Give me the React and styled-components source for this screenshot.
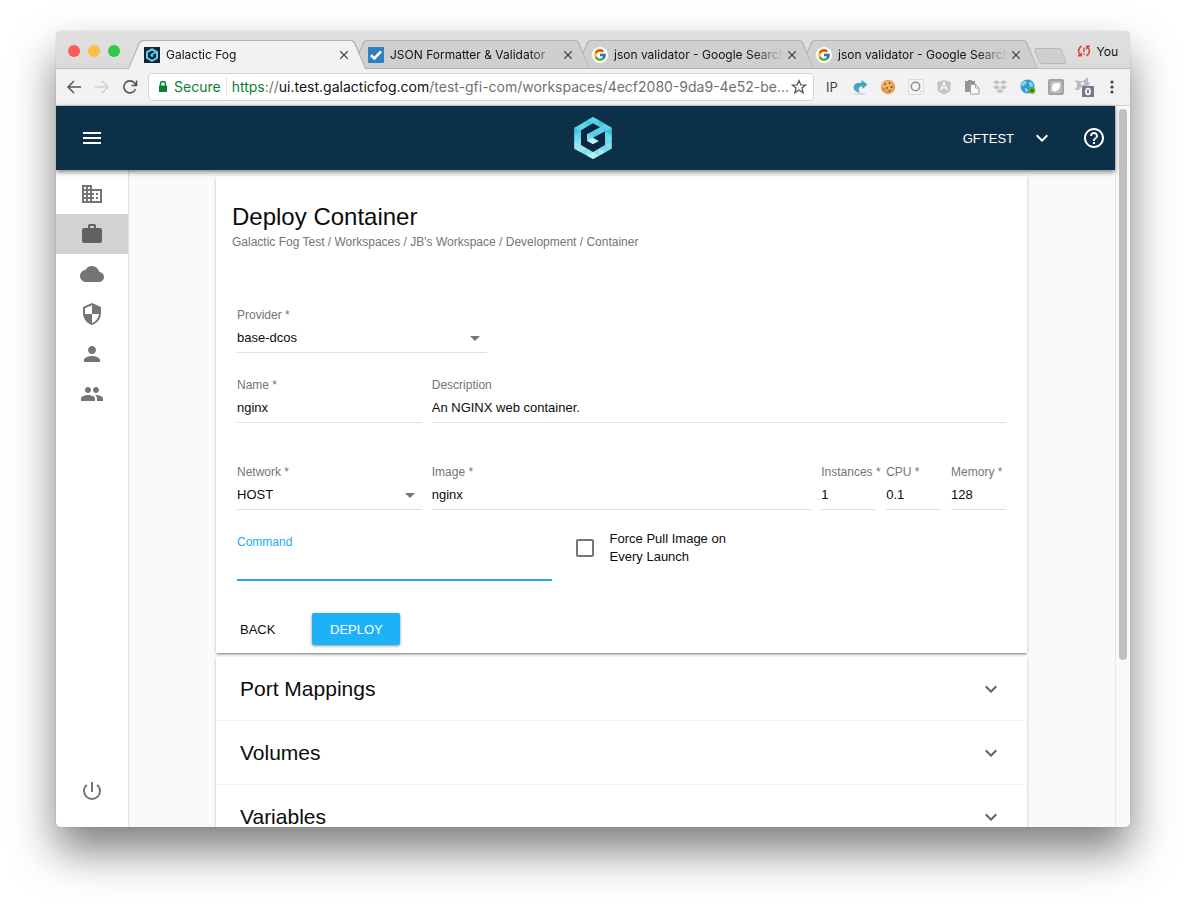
import React from "react";
import styled, { createGlobalStyle, css } from "styled-components";
import {
  MdMenu, MdKeyboardArrowDown, MdHelpOutline, MdDomain, MdWork, MdCloud,
  MdSecurity, MdPerson, MdPeople, MdPowerSettingsNew, MdArrowDropDown,
} from "react-icons/md";
import { FcGoogle } from "react-icons/fc";

const uiFont = `Inter, "Liberation Sans", sans-serif`;
const pageFont = `"Liberation Sans", Helvetica, Arial, sans-serif`;

const Global = createGlobalStyle`
  *, *::before, *::after { box-sizing: border-box; }
  body { margin: 0; background: #fff; }
  button, input, select { font: inherit; color: inherit; margin: 0; }
  button { border: 0; padding: 0; background: none; cursor: pointer; }
  svg { display: block; flex: none; }
`;

const Desktop = styled.div`
  height: 100vh;
  padding: 31px 56px 80px;
  display: flex;
  overflow: hidden;
`;

const BrowserWindow = styled.div`
  flex: 1;
  min-width: 0;
  display: flex;
  flex-direction: column;
  border-radius: 5px;
  overflow: hidden;
  background: #fafafa;
  box-shadow: 0 0 1px rgba(0, 0, 0, 0.35), 0 24px 44px rgba(0, 0, 0, 0.5);
`;

/* ---------- tab strip ---------- */

const TabStrip = styled.div`
  flex: none;
  height: 38px;
  display: flex;
  align-items: flex-end;
  padding: 0 12px;
  background: linear-gradient(#e0e0e0, #dadada);
  border-bottom: 1px solid #bdbdbd;
  font-family: ${uiFont};
  font-size: 12px;
  color: #111;
`;

const Lights = styled.div`
  flex: none;
  display: flex;
  gap: 8px;
  width: 60px;
  height: 23px;
`;

const Light = styled.button`
  width: 12px;
  height: 12px;
  border-radius: 50%;
  background: ${(p) => p.$color};
`;

const TabList = styled.div`
  display: flex;
  flex: 0 1 896px;
  min-width: 0;
  isolation: isolate;
  margin-bottom: -1px;
`;

const Tab = styled.div`
  position: relative;
  z-index: ${(p) => p.$level};
  flex: 1 1 0;
  min-width: 0;
  height: 29px;
  margin-right: -14px;
  padding: 0 17px 0 16px;
  display: flex;
  align-items: center;
  &::before, &::after {
    content: "";
    position: absolute;
    z-index: -1;
    inset: 0;
    background: #b2b2b2;
    clip-path: polygon(0 100%, 11px 2px, 14px 0, calc(100% - 14px) 0, calc(100% - 11px) 2px, 100% 100%);
  }
  &::after {
    inset: 1px 1px ${(p) => (p.$active ? 0 : 1)}px;
    background: ${(p) => (p.$active ? "#f2f2f2" : "#cfcfcf")};
  }
`;

const TabTitle = styled.button`
  flex: 1;
  min-width: 0;
  margin-right: -6px;
  padding-left: 6px;
  overflow: hidden;
  white-space: nowrap;
  text-align: left;
  line-height: 18px;
  mask-image: linear-gradient(90deg, #000 calc(100% - 40px), transparent calc(100% - 8px));
`;

const TabClose = styled.button`
  display: flex;
  width: 10px;
  height: 10px;
`;

const NewTab = styled.button`
  flex: none;
  width: 32px;
  height: 16px;
  margin: 0 0 4px 10px;
`;

const Profile = styled.button`
  display: flex;
  align-items: center;
  gap: 5px;
  margin-left: auto;
  height: 34px;
`;

/* ---------- address toolbar ---------- */

const Toolbar = styled.div`
  flex: none;
  height: 37px;
  display: flex;
  align-items: center;
  padding: 0 10px;
  gap: 10px;
  background: #f2f2f2;
  border-bottom: 1px solid #d0d0d0;
  font-family: ${uiFont};
`;

const ButtonGroup = styled.div`
  flex: none;
  display: flex;
  align-items: center;
  gap: 12px;
  color: #444;
  font-size: 13px;
`;

const IconButton = styled.button`
  display: flex;
  align-items: center;
  justify-content: center;
  width: 16px;
  height: 16px;
`;

const Omnibox = styled.div`
  flex: 1;
  min-width: 0;
  height: 28px;
  display: flex;
  align-items: center;
  padding: 0 6px 0 8px;
  gap: 5px;
  background: #fff;
  border: 1px solid #d4d4d4;
  border-radius: 4px;
  font-size: 14px;
  line-height: 20px;
`;

const Secure = styled.span`
  padding-right: 5px;
  border-right: 1px solid #e2e2e2;
  color: #0b8033;
`;

const Url = styled.div`
  flex: 1;
  min-width: 0;
  white-space: nowrap;
  color: #717171;
  b { font-weight: 400; color: #111; }
  i { font-style: normal; color: #0b8033; }
`;

/* ---------- application ---------- */

const Viewport = styled.div`
  flex: 1;
  min-height: 0;
  display: flex;
`;

const AppFrame = styled.div`
  flex: 1;
  min-width: 0;
  display: flex;
  flex-direction: column;
  font-family: ${pageFont};
  font-size: 13px;
  color: #0c0c0c;
`;

const ScrollTrack = styled.div`
  width: 15px;
  padding: 3px 2px 3px 3px;
  background: #fafafa;
  border-left: 1px solid #e7e7e7;
`;

const ScrollThumb = styled.div`
  width: 8px;
  height: 77%;
  border-radius: 4px;
  background: #c1c1c1;
`;

const AppBar = styled.header`
  position: relative;
  z-index: 2;
  flex: none;
  height: 64px;
  display: grid;
  grid-template-columns: 1fr auto 1fr;
  align-items: center;
  padding: 0 9px 0 24px;
  background: #0d3049;
  color: #fff;
  box-shadow: 0 2px 5px rgba(0, 0, 0, 0.5);
`;

const BarButton = styled.button`
  display: flex;
  align-items: center;
  gap: 16px;
`;

const BarActions = styled.div`
  display: flex;
  justify-content: flex-end;
  gap: 28px;
`;

const Body = styled.div`
  flex: 1;
  min-height: 0;
  display: flex;
`;

const SideNav = styled.nav`
  position: relative;
  z-index: 1;
  flex: none;
  width: 72px;
  display: flex;
  flex-direction: column;
  padding: 4px 0 16px;
  background: #fff;
  box-shadow: 0 0 2px rgba(0, 0, 0, 0.3);
`;

const NavLink = styled.a`
  display: flex;
  align-items: center;
  justify-content: center;
  height: 40px;
  color: ${(p) => (p.$active ? "#616161" : "#757575")};
  background: ${(p) => (p.$active ? "#d2d2d2" : "transparent")};
  ${(p) => p.$last && css`margin-top: auto;`}
`;

const Main = styled.main`
  flex: 1;
  min-width: 0;
  overflow: hidden;
  padding: 6px 88px 0;
`;

const raised = css`
  box-shadow: 0 2px 2px -1px rgba(0, 0, 0, 0.4), 0 1px 3px rgba(0, 0, 0, 0.2);
`;

const Card = styled.section`
  padding: 24px 16px 8px;
  margin-bottom: 4px;
  background: #fff;
  ${raised}
`;

const Title = styled.h1`
  margin: 0;
  font-size: 24px;
  font-weight: 400;
  line-height: 34px;
`;

const Breadcrumb = styled.div`
  font-size: 12px;
  line-height: 16px;
  color: #757575;
`;

const Form = styled.form`
  padding-top: 53px;
`;

const Row = styled.div`
  display: grid;
  grid-template-columns: repeat(12, minmax(0, 1fr));
  column-gap: 10px;
  padding: 0 5px;
  margin-bottom: ${(p) => p.$after}px;
`;

const FieldBox = styled.div`
  position: relative;
  grid-column: span ${(p) => p.$span};
  padding-top: 3px;
  display: flex;
  flex-direction: column;
  label {
    font-size: 12px;
    line-height: 18px;
    white-space: nowrap;
    color: ${(p) => (p.$focused ? "#1cabf3" : "#757575")};
  }
  input, select {
    width: 100%;
    height: ${(p) => (p.$focused ? 30 : 29)}px;
    padding: 0 0 2px;
    border: 0;
    border-bottom: ${(p) => (p.$focused ? "2px solid #2ba9f0" : "1px solid #e0e0e0")};
    border-radius: 0;
    background: none;
    outline: none;
    appearance: none;
  }
  svg {
    position: absolute;
    right: 0;
    bottom: 3px;
    color: #757575;
    pointer-events: none;
  }
`;

const CheckLabel = styled.label`
  grid-column: span 3;
  display: flex;
  align-items: flex-start;
  gap: 16px;
  padding-left: 14px;
  line-height: 18px;
  span { max-width: 120px; }
  input {
    flex: none;
    appearance: none;
    width: 18px;
    height: 18px;
    margin: 9px 0;
    border: 2px solid #757575;
    border-radius: 2px;
  }
`;

const FormActions = styled.div`
  display: flex;
  gap: 29px;
`;

const ActionButton = styled.button`
  height: 32px;
  padding: 0 8px;
  border-radius: 2px;
  ${(p) => p.$primary && css`
    min-width: 88px;
    color: #fff;
    background: #1db1f8;
    box-shadow: 0 1px 3px rgba(0, 0, 0, 0.45);
  `}
`;

const Panels = styled.section`
  background: #fff;
  ${raised}
`;

const Panel = styled.button`
  width: 100%;
  height: 64px;
  padding: 1px 24px 0;
  display: flex;
  align-items: center;
  justify-content: space-between;
  font-size: 21px;
  border-bottom: 1px solid #f4f4f4;
  svg { color: #616161; }
`;

/* ---------- drawings ---------- */

function HexG({ width, height }) {
  const shade = [
    ["M56 0 74 10 56 20 38 10Z", "#5fd6ea"], ["M38 10 56 20 38 30Z", "#3bc4df"],
    ["M74 10 92 21 74 31Z", "#35c0dd"], ["M92 21 112 32 92 44Z", "#56d2e9"],
    ["M112 32V53L92 44Z", "#2fb9d8"], ["M112 53V74L92 63Z", "#71dff0"],
    ["M112 74V95L92 84Z", "#86e6f3"], ["M0 32 20 42 0 53Z", "#3cc2de"],
    ["M0 53 20 63 0 74Z", "#6fdcee"], ["M20 63V84L0 74Z", "#8ae7f3"],
    ["M0 74 20 84 0 95Z", "#a2eef7"], ["M0 95 20 84 38 95 20 106Z", "#a4ecf6"],
    ["M38 95 56 105 38 116Z", "#8fe5f2"], ["M56 105 74 116 56 126 38 116Z", "#c6f6fb"],
    ["M74 95 92 106 74 116Z", "#b8f3fa"], ["M38 51 56 62 38 72Z", "#7de2f1"],
    ["M56 62 74 72 56 82 38 72Z", "#d8fafd"], ["M56 41 74 52 56 62Z", "#4fcde6"],
    ["M20 20 38 30 20 41Z", "#6adaed"],
  ];
  return (
    <svg width={width} height={height} viewBox="0 0 112 126">
      <defs>
        <linearGradient id="hexFill" x1="0" y1="0" x2="0" y2="1">
          <stop offset="0" stopColor="#55cfe6" />
          <stop offset="0.5" stopColor="#5fd4ea" />
          <stop offset="1" stopColor="#8fe6f3" />
        </linearGradient>
      </defs>
      <path d="M56 0 112 32V95L56 126 0 95V32Z" fill="url(#hexFill)" />
      {shade.map(([d, fill]) => <path key={d} d={d} fill={fill} opacity="0.75" />)}
      <path d="M56 19 77 31 38 52V72L56 82 74 72 56 62 92 43V84L56 105 20 84V40Z" fill="#0b2740" />
    </svg>
  );
}

function FogFavicon() {
  return (
    <svg width="16" height="16" viewBox="0 0 16 16">
      <rect width="16" height="16" fill="#12263c" />
      <path d="M8 1 14 4.500V11.500L8 15 2 11.500V4.500Z" fill="#5ccfe6" />
      <path d="M8 3.500 10.500 5 6.500 7.200V9L8 10 10 9 8.500 8 12 6V10.500L8 12.800 4 10.500V5.700Z" fill="#12263c" />
    </svg>
  );
}

function CheckFavicon() {
  return (
    <svg width="16" height="16" viewBox="0 0 16 16">
      <rect width="16" height="16" rx="1" fill="#2b80bd" />
      <path d="M3 8.300 6.400 11.500 13 4.300" fill="none" stroke="#fff" strokeWidth="2.600" />
    </svg>
  );
}

const GoogleCircle = styled.span`
  flex: none;
  display: flex;
  align-items: center;
  justify-content: center;
  width: 16px;
  height: 16px;
  border-radius: 50%;
  background: #fff;
`;

function GoogleFavicon() {
  return <GoogleCircle><FcGoogle size={14} /></GoogleCircle>;
}

function Stroke({ d, size = 16, color = "#555", width = 1.5 }) {
  return (
    <svg width={size} height={size} viewBox="0 0 16 16" fill="none" stroke={color} strokeWidth={width}>
      <path d={d} />
    </svg>
  );
}

const extensionArt = {
  "Redo": (
    <>
      <ellipse cx="8" cy="14.800" rx="6.500" ry="0.900" fill="#d0d4d6" />
      <path d="M9.500 1 15.500 5.500 10.500 10V7.500C7 7 5.500 9.500 8 13.800 3.500 13 0.500 10 2 6.500 3.300 4 6.500 3.500 9.500 4Z" fill="#4aa3c7" />
    </>
  ),
  "Cookies": (
    <>
      <circle cx="8" cy="8" r="7.200" fill="#e2a052" />
      <circle cx="7" cy="6.500" r="5" fill="#efb568" />
      <g fill="#7b4a20">
        <circle cx="5" cy="5" r="0.900" /><circle cx="9.500" cy="4" r="0.900" /><circle cx="11.500" cy="8" r="1" />
        <circle cx="7" cy="9" r="0.900" /><circle cx="4" cy="10" r="0.700" /><circle cx="9.500" cy="12" r="0.900" />
      </g>
    </>
  ),
  "Opera": (
    <>
      <rect x="0.500" y="0.500" width="15" height="15" rx="1" fill="#f6f6f6" stroke="#dcdcdc" />
      <circle cx="7.500" cy="7.500" r="4.200" fill="none" stroke="#8f8f8f" strokeWidth="1.500" />
      <circle cx="13" cy="12.500" r="0.800" fill="#bbb" />
    </>
  ),
  "Angular": (
    <>
      <path d="M8 1 15 3.300 14 12.300 8 15.500 2 12.300 1 3.300Z" fill="#c2c2c2" />
      <path d="M4.500 11.500 8 3.500 11.500 11.500M6 9H10" fill="none" stroke="#f6f6f6" strokeWidth="1.400" />
    </>
  ),
  "Clipboard": (
    <>
      <path d="M1 2H4V1H8V2H11V5H6V13H1Z" fill="#959595" />
      <path d="M6.500 5.500H11.500L15 9V15H6.500Z" fill="#fafafa" stroke="#a2a2a2" />
      <path d="M11.500 5.500V9H15" fill="none" stroke="#a2a2a2" />
    </>
  ),
  "Dropbox": (
    <path d="M4.500 1 8 3.300 4.500 5.600 1 3.300ZM11.500 1 15 3.300 11.500 5.600 8 3.300ZM4.500 6 8 8.300 4.500 10.600 1 8.300ZM11.500 6 15 8.300 11.500 10.600 8 8.300ZM8 9.500 11.500 12 8 14.500 4.500 12Z" fill="#c3c3c3" />
  ),
  "Globe": (
    <>
      <circle cx="7.500" cy="7.500" r="7" fill="#2f9ad0" />
      <path d="M3 3C5 1 7 2 6.500 4 6 6 3 6 2 8 1 6 1.500 4.500 3 3ZM8.500 3 12 3.500 13.500 7 10 8ZM5 9 8 10 7 13.500 5 12Z" fill="#8fd4ee" />
      <circle cx="12" cy="11.500" r="3.300" fill="#6aa62f" />
      <circle cx="12" cy="11.500" r="1.200" fill="#2a5a12" />
    </>
  ),
  "Shape": (
    <>
      <rect width="16" height="16" rx="2" fill="#a3a3a3" />
      <rect x="2" y="2" width="12" height="12" rx="2" fill="#bdbdbd" />
      <path d="M11.500 3.500C13 7 11 12 7 12.500 4 12.500 3 9 4.500 6 6 3.500 9 4.500 11.500 3.500Z" fill="#fff" />
    </>
  ),
};

function BlockerIcon() {
  return (
    <svg width="20" height="20" viewBox="0 0 20 20">
      <path d="M1 3 5 4 9 4 14 0V5L16 6 14 9 11 10 8 9 5 13H0L3 10 3 7Z" fill="#b9bac4" />
      <circle cx="8.500" cy="6.500" r="1.800" fill="#ececf0" />
      <rect x="8" y="9" width="12" height="11" fill="#77788a" />
      <ellipse cx="14" cy="14.500" rx="2" ry="3" fill="none" stroke="#fff" strokeWidth="1.700" />
    </svg>
  );
}

/* ---------- parts ---------- */

const tabs = [
  { title: "Galactic Fog", icon: <FogFavicon />, active: true },
  { title: "JSON Formatter & Validator", icon: <CheckFavicon /> },
  { title: "json validator - Google Search", icon: <GoogleFavicon /> },
  { title: "json validator - Google Search", icon: <GoogleFavicon /> },
];

const navItems = [
  ["Organizations", MdDomain], ["Workspaces", MdWork], ["Providers", MdCloud],
  ["Entitlements", MdSecurity], ["Users", MdPerson], ["Groups", MdPeople],
];

function Field({ id, label, span, value = "", focused, options }) {
  return (
    <FieldBox $span={span} $focused={focused}>
      <label htmlFor={id}>{label}</label>
      {options ? (
        <>
          <select id={id} defaultValue={value}>
            {options.map((o) => <option key={o}>{o}</option>)}
          </select>
          <MdArrowDropDown size={24} />
        </>
      ) : (
        <input id={id} type="text" defaultValue={value} />
      )}
    </FieldBox>
  );
}

function BrowserChrome() {
  return (
    <>
      <TabStrip>
        <Lights>
          <Light $color="#fc5b57" aria-label="Close window" />
          <Light $color="#fdbe41" aria-label="Minimize window" />
          <Light $color="#34c84a" aria-label="Zoom window" />
        </Lights>
        <TabList>
          {tabs.map((t, i) => (
            <Tab key={i} $active={t.active} $level={tabs.length - i}>
              {t.icon}
              <TabTitle>{t.title}</TabTitle>
              <TabClose aria-label="Close tab">
                <Stroke d="M2 2 14 14M14 2 2 14" size={10} color="#444" width={1.8} />
              </TabClose>
            </Tab>
          ))}
        </TabList>
        <NewTab aria-label="New tab">
          <svg width="32" height="16" viewBox="0 0 32 16">
            <path d="M2 0.500H25Q27 0.500 27.600 2L31.500 14Q31.800 15.500 30 15.500H8Q6 15.500 5.400 14L0.800 2Q0.400 0.500 2 0.500Z" fill="#cfcfcf" stroke="#b8b8b8" />
          </svg>
        </NewTab>
        <Profile>
          <svg width="14" height="14" viewBox="0 0 14 14" fill="none" stroke="#d8402f" strokeWidth="1.400">
            <path d="M4.500 2.200Q1.500 4 1.600 7.500 1.800 9.500 3.600 11.300M1 11.700H4.200V8.800M9.500 11.800Q12.500 10 12.400 6.500 12.200 4.500 10.400 2.700M13 2.300H9.800V5.200M7 3.500V8M7 9.500V11" />
          </svg>
          You
        </Profile>
      </TabStrip>
      <Toolbar>
        <ButtonGroup>
          <IconButton aria-label="Back"><Stroke d="M15 8H2M8 2 2 8 8 14" /></IconButton>
          <IconButton aria-label="Forward"><Stroke d="M1 8H14M8 2 14 8 8 14" color="#cfcfcf" /></IconButton>
          <IconButton aria-label="Reload">
            <Stroke d="M13.500 10A6 6 0 1 1 12.500 4L14 6M14.500 1.500V6.500H9.500" width={1.6} />
          </IconButton>
        </ButtonGroup>
        <Omnibox>
          <svg width="12" height="14" viewBox="0 0 12 14">
            <path d="M3.500 6V4A2.500 2.500 0 0 1 8.500 4V6" fill="none" stroke="#0b8033" strokeWidth="1.400" />
            <rect x="2" y="5.500" width="8" height="6.500" rx="0.500" fill="#0b8033" />
          </svg>
          <Secure>Secure</Secure>
          <Url role="textbox" aria-label="Address">
            <i>https</i>://<b>ui.test.galacticfog.com</b>/test-gfi-com/workspaces/4ecf2080-9da9-4e52-be...
          </Url>
          <IconButton aria-label="Bookmark this page">
            <Stroke d="M8 1.500 9.900 6H14.600L10.900 9 12.200 13.800 8 11 3.800 13.800 5.100 9 1.400 6H6.100Z" width={1.2} />
          </IconButton>
        </Omnibox>
        <ButtonGroup>
          <IconButton aria-label="IP address">IP</IconButton>
          {Object.entries(extensionArt).map(([name, art]) => (
            <IconButton key={name} aria-label={name}>
              <svg width="16" height="16" viewBox="0 0 16 16">{art}</svg>
            </IconButton>
          ))}
          <IconButton aria-label="Blocker"><BlockerIcon /></IconButton>
          <IconButton aria-label="Browser menu">
            <svg width="4" height="14" viewBox="0 0 4 14" fill="#444">
              <circle cx="2" cy="2" r="1.600" /><circle cx="2" cy="7" r="1.600" /><circle cx="2" cy="12" r="1.600" />
            </svg>
          </IconButton>
        </ButtonGroup>
      </Toolbar>
    </>
  );
}

export default function App() {
  return (
    <Desktop>
      <Global />
      <BrowserWindow>
        <BrowserChrome />
        <Viewport>
          <AppFrame>
            <AppBar>
              <BarButton aria-label="Menu"><MdMenu size={24} /></BarButton>
              <HexG width={38} height={42} />
              <BarActions>
                <BarButton>GFTEST<MdKeyboardArrowDown size={24} /></BarButton>
                <BarButton aria-label="Help"><MdHelpOutline size={24} /></BarButton>
              </BarActions>
            </AppBar>
            <Body>
              <SideNav>
                {navItems.map(([name, Icon]) => (
                  <NavLink key={name} href="#" aria-label={name} $active={name === "Workspaces"}>
                    <Icon size={24} />
                  </NavLink>
                ))}
                <NavLink href="#" aria-label="Log out" $last><MdPowerSettingsNew size={24} /></NavLink>
              </SideNav>
              <Main>
                <Card>
                  <Title>Deploy Container</Title>
                  <Breadcrumb>Galactic Fog Test / Workspaces / JB's Workspace / Development / Container</Breadcrumb>
                  <Form>
                    <Row $after={20}>
                      <Field id="provider" label="Provider *" span={4} value="base-dcos" options={["base-dcos"]} />
                    </Row>
                    <Row $after={37}>
                      <Field id="name" label="Name *" span={3} value="nginx" />
                      <Field id="description" label="Description" span={9} value="An NGINX web container." />
                    </Row>
                    <Row $after={20}>
                      <Field id="network" label="Network *" span={3} value="HOST" options={["HOST", "BRIDGE"]} />
                      <Field id="image" label="Image *" span={6} value="nginx" />
                      <Field id="instances" label="Instances *" span={1} value="1" />
                      <Field id="cpu" label="CPU *" span={1} value="0.1" />
                      <Field id="memory" label="Memory *" span={1} value="128" />
                    </Row>
                    <Row $after={32}>
                      <Field id="command" label="Command" span={5} focused />
                      <CheckLabel>
                        <input type="checkbox" />
                        <span>Force Pull Image on Every Launch</span>
                      </CheckLabel>
                    </Row>
                    <FormActions>
                      <ActionButton type="button">BACK</ActionButton>
                      <ActionButton type="button" $primary>DEPLOY</ActionButton>
                    </FormActions>
                  </Form>
                </Card>
                <Panels>
                  {["Port Mappings", "Volumes", "Variables"].map((name) => (
                    <Panel key={name}>{name}<MdKeyboardArrowDown size={24} /></Panel>
                  ))}
                </Panels>
              </Main>
            </Body>
          </AppFrame>
          <ScrollTrack><ScrollThumb /></ScrollTrack>
        </Viewport>
      </BrowserWindow>
    </Desktop>
  );
}
